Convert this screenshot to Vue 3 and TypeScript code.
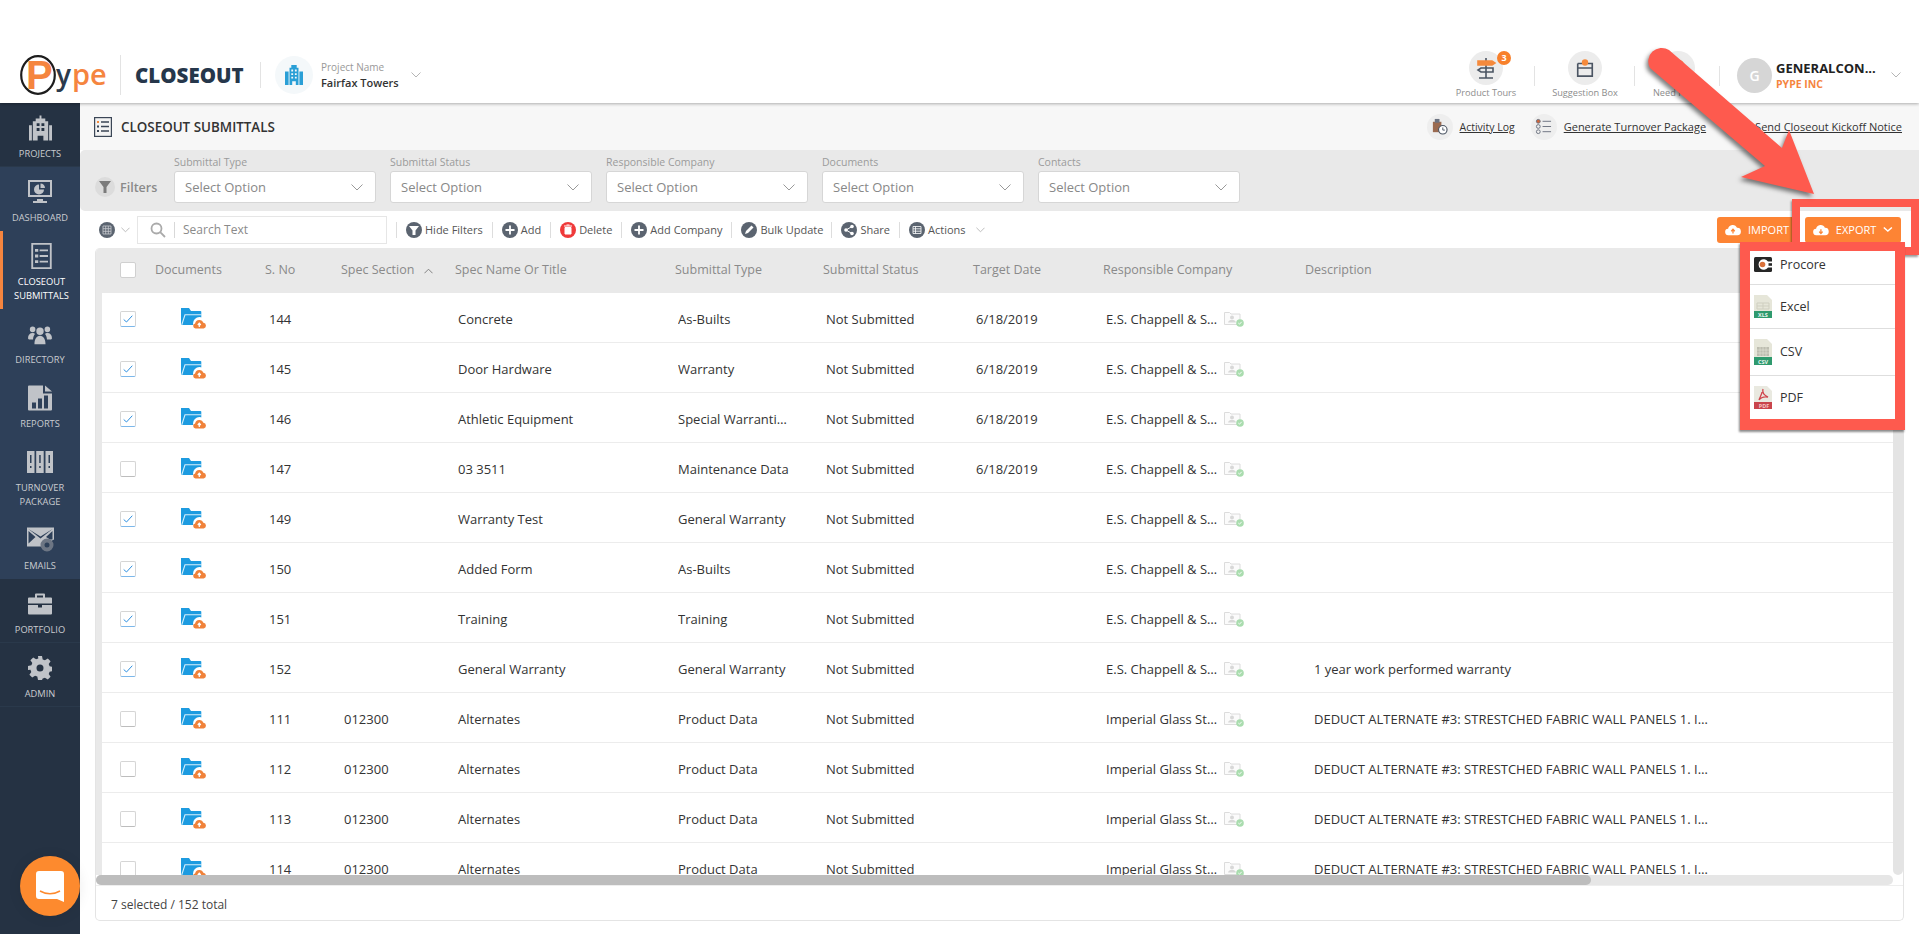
<template>
  <div class="app">
    <svg class="defs" width="0" height="0">
      <defs>
        <symbol id="folder" viewBox="0 0 25 21">
          <path d="M0 0h8l2 3h9.500a.8.8 0 0 1 .8.8V17H0z" fill="#1d9be0" />
          <path d="M.7 17L4 6.800h17" fill="none" stroke="#d5eefa" stroke-width="1.100" />
          <circle cx="18.500" cy="15.500" r="6.500" fill="#fff" />
          <path d="M14.500 20.500a2.600 2.600 0 0 1-.4-5.100 4.300 4.300 0 0 1 8.300-.6 2.900 2.900 0 0 1 .3 5.700z" fill="#f0823a" />
          <path d="M18.300 19v-3.200M16.800 17l1.500-1.800 1.500 1.800" fill="none" stroke="#fff" stroke-width="1.200" />
        </symbol>
        <symbol id="person-folder" viewBox="0 0 20 16">
          <path d="M.5 1.500h5l1.500 1.500h9v10.500H.5z" fill="#fbfbfb" stroke="#dcdcdc" />
          <circle cx="8" cy="6.500" r="2" fill="#d8d8d8" />
          <path d="M4 11.500c.5-2 2-2.500 4-2.500s3.500.5 4 2.500z" fill="#d8d8d8" />
          <circle cx="16" cy="12" r="3.800" fill="#a9dcae" />
          <path d="M14.300 12l1.200 1.200 2.200-2.400" fill="none" stroke="#fff" stroke-width=".9" />
        </symbol>
      </defs>
    </svg>

    <header class="topbar">
      <svg class="logo" viewBox="0 0 87 40" width="87" height="40">
        <ellipse cx="18" cy="20" rx="16.800" ry="18.800" fill="#fff" stroke="#1d1d1d" stroke-width="2.200" />
        <text x="6" y="34" class="logo-p">P</text>
        <text x="36" y="30" class="logo-y">y</text>
        <text x="52" y="30" class="logo-pe">pe</text>
      </svg>
      <span class="vline logo-line"></span>
      <span class="product">CLOSEOUT</span>
      <span class="vline product-line"></span>
      <span class="project-icon">
        <svg viewBox="0 0 20 22" width="18" height="20" fill="#2a9fd6">
          <path d="M7 0h6v3h2v19h-3v-4H8v4H5V3h2z" />
          <path d="M0 7h4v15H0zM16 7h4v15h-4z" />
          <path d="M7 5h2v2H7zm4 0h2v2h-2zM7 9h2v2H7zm4 0h2v2h-2zM7 13h2v2H7zm4 0h2v2h-2z" fill="#f4f8fa" />
        </svg>
      </span>
      <div class="project">
        <span class="project-label">Project Name</span>
        <span class="project-name">Fairfax Towers</span>
      </div>
      <svg class="chev project-chev" viewBox="0 0 10 6" width="10" height="6"><path d="M.5.500L5 5l4.500-4.500" /></svg>

      <div class="top-right">
        <div class="tool tool-tours">
          <span class="tool-icon">
            <svg viewBox="0 0 22 22" width="22" height="22" fill="none" stroke="#4b5563" stroke-width="1.600">
              <path d="M11 1v20M4 21h14" />
              <path d="M18 11v4H6l-3-2 3-2z" />
              <path d="M3 4h14l3 2-3 2H3z" fill="#f58a3c" stroke="#f58a3c" />
            </svg>
            <b class="badge">3</b>
          </span>
          <span class="tool-label">Product Tours</span>
        </div>
        <div class="tool tool-box">
          <span class="tool-icon">
            <svg viewBox="0 0 22 22" width="20" height="20" fill="none" stroke="#4b5563" stroke-width="1.800">
              <path d="M3 6h5M14 6h5v14H3V6M3 11h16" />
              <circle cx="11" cy="5" r="3.500" fill="#f58a3c" stroke="none" />
            </svg>
          </span>
          <span class="tool-label">Suggestion Box</span>
        </div>
        <div class="tool tool-help">
          <span class="tool-icon">
            <svg viewBox="0 0 22 22" width="20" height="20" fill="none" stroke="#4b5563" stroke-width="1.800">
              <circle cx="11" cy="9" r="6.500" stroke="#f58a3c" />
              <path d="M8 18h6M9 21h4" />
            </svg>
          </span>
          <span class="tool-label">Need Help?</span>
        </div>
        <div class="user">
          <span class="avatar">G</span>
          <div class="user-text">
            <span class="user-name">GENERALCON...</span>
            <span class="user-org">PYPE INC</span>
          </div>
          <svg class="chev" viewBox="0 0 10 6" width="10" height="6"><path d="M.5.500L5 5l4.500-4.500" /></svg>
        </div>
      </div>
    </header>

    <div class="body">
      <nav class="sidebar">
        <a v-for="item in navItems" :key="item.label" class="nav-item" :class="item.tone">
          <svg class="nav-icon" :viewBox="item.box" :width="item.w" :height="item.h" fill="#c0c3c8">
            <path v-for="p in item.paths" :key="p.d" :d="p.d" :fill="p.fill" :fill-rule="p.rule" />
          </svg>
          <span v-for="line in item.label.split(' ')" :key="line" class="nav-label">{{ line }}</span>
        </a>
      </nav>

      <main class="main">
        <div class="subhead">
          <svg class="title-icon" viewBox="0 0 18 20" width="18" height="20" fill="none" stroke="#3b4656" stroke-width="1.200">
            <rect x=".6" y=".6" width="16.800" height="18.800" fill="#f3f3f3" />
            <path d="M7 5h8M7 9.500h8M7 14h8" stroke-width="1.600" />
            <path d="M3 5h2" stroke="#f58a3c" stroke-width="2" />
            <path d="M3 9.500h2M3 14h2" stroke-width="2" />
          </svg>
          <span class="title">CLOSEOUT SUBMITTALS</span>
          <div class="sub-links">
            <a class="sub-link">
              <span class="sub-icon">
                <svg viewBox="0 0 18 18" width="17" height="17">
                  <path d="M2 4h9v11H2z" fill="#9a6a50" />
                  <path d="M4 1h5v4H4z" fill="#6b7280" />
                  <circle cx="12.500" cy="12.500" r="4.500" fill="#fff" stroke="#4b5563" stroke-width="1.200" />
                  <path d="M12.500 10v2.800h2.200" fill="none" stroke="#4b5563" />
                </svg>
              </span>
              <span class="sub-text sub-activity">Activity Log</span>
            </a>
            <a class="sub-link">
              <span class="sub-icon">
                <svg viewBox="0 0 18 18" width="17" height="17" fill="none" stroke="#6b7280" stroke-width="1">
                  <circle cx="3.500" cy="3.500" r="2" fill="#d0653a" />
                  <circle cx="3.500" cy="9" r="2" />
                  <circle cx="3.500" cy="14.500" r="2" />
                  <path d="M8 3.500h9M8 9h9M8 14.500h9" />
                </svg>
              </span>
              <span class="sub-text">Generate Turnover Package</span>
            </a>
            <a class="sub-link">
              <span class="sub-icon">
                <svg viewBox="0 0 18 18" width="16" height="16" fill="none" stroke="#6b7280"><path d="M2 4h14v10H2zM2 4l7 6 7-6" /></svg>
              </span>
              <span class="sub-text">Send Closeout Kickoff Notice</span>
            </a>
          </div>
        </div>

        <div class="filters">
          <div class="filter-title">
            <span class="filter-dot">
              <svg viewBox="0 0 12 12" width="12" height="12"><path d="M0 0h12L7.500 6v6h-3V6z" fill="#7b7b7b" /></svg>
            </span>
            Filters
          </div>
          <label v-for="f in filterFields" :key="f" class="filter">
            <span class="filter-label">{{ f }}</span>
            <span class="select">
              Select Option
              <svg class="chev" viewBox="0 0 12 7" width="12" height="7"><path d="M.5.500L6 6l5.500-5.500" /></svg>
            </span>
          </label>
        </div>

        <div class="toolbar">
          <span class="round-icon view-icon">
            <svg viewBox="0 0 10 10" width="10" height="10" fill="none" stroke="#c9ccd0" stroke-width=".8"><path d="M1 1h8v8H1zM1 3.700h8M1 6.300h8M3.700 1v8M6.300 1v8" /></svg>
          </span>
          <svg class="chev view-chev" viewBox="0 0 10 6" width="9" height="6"><path d="M.5.500L5 5l4.500-4.500" /></svg>
          <div class="search">
            <svg viewBox="0 0 16 16" width="16" height="16" fill="none" stroke="#aaa" stroke-width="1.800"><circle cx="6.500" cy="6.500" r="5" /><path d="M10.200 10.200L15 15" /></svg>
            <span class="search-text">Search Text</span>
          </div>
          <div class="actions">
            <a v-for="a in toolActions" :key="a.label" class="action">
              <span class="round-icon" :class="{ 'is-red': a.red }">
                <svg viewBox="0 0 16 16" width="16" height="16" v-html="a.icon"></svg>
              </span>
              {{ a.label }}
              <svg v-if="a.caret" class="chev action-chev" viewBox="0 0 10 6" width="9" height="6"><path d="M.5.500L5 5l4.500-4.500" /></svg>
            </a>
          </div>
          <div class="io-buttons">
            <button class="io-btn import-btn">
              <svg viewBox="0 0 20 15" width="18" height="14"><path d="M4.500 14a4 4 0 0 1-.6-8A5.800 5.800 0 0 1 15 4.800 4.600 4.600 0 0 1 15.500 14z" fill="#fff" /><path d="M10 12V7M7.800 9L10 6.600 12.200 9" fill="none" stroke="#fd8434" stroke-width="1.600" /></svg>
              IMPORT
            </button>
            <div class="export-wrap">
              <button class="io-btn export-btn">
                <svg viewBox="0 0 20 15" width="18" height="14"><path d="M4.500 14a4 4 0 0 1-.6-8A5.800 5.800 0 0 1 15 4.800 4.600 4.600 0 0 1 15.500 14z" fill="#fff" /><path d="M10 6.500v5M7.800 9.500l2.200 2.400 2.200-2.400" fill="none" stroke="#fd8434" stroke-width="1.600" /></svg>
                EXPORT
                <svg viewBox="0 0 12 7" width="11" height="7" fill="none" stroke="#fff" stroke-width="1.800"><path d="M1 1l5 4.500L11 1" /></svg>
              </button>
              <div class="highlight"></div>
              <ul class="export-menu">
                <li class="menu-item">
                  <svg viewBox="0 0 18 15" width="18" height="15">
                    <rect width="18" height="15" rx="1.500" fill="#262626" />
                    <path d="M18 4.500h-4a5.200 5.200 0 1 0 0 6h4z" fill="#fff" />
                    <path d="M18 6.200h-3.500v2.600H18z" fill="#262626" />
                    <circle cx="8.500" cy="7.500" r="2.800" fill="#d9713a" />
                  </svg>
                  Procore
                </li>
                <li class="menu-item">
                  <svg viewBox="0 0 18 23" width="18" height="23">
                    <path d="M0 0h13l5 5v12H0z" fill="#e6e6d9" />
                    <path d="M3 8h12v6H3zM3 11h12M9 8v6" fill="none" stroke="#cfcfc0" />
                    <rect y="16" width="18" height="7" fill="#2f9a6e" />
                    <text x="9" y="22" class="file-tag">XLS</text>
                  </svg>
                  Excel
                </li>
                <li class="menu-item">
                  <svg viewBox="0 0 18 26" width="18" height="26">
                    <path d="M0 0h13l5 5v15H0z" fill="#e6e6d9" />
                    <path d="M3 8h12v9H3z" fill="#bdbdb0" />
                    <path d="M3 11h12M3 14h12M6 8v9M9 8v9M12 8v9" stroke="#e6e6d9" stroke-width=".6" />
                    <rect y="18" width="18" height="8" fill="#2f9a6e" />
                    <text x="9" y="25" class="file-tag">CSV</text>
                  </svg>
                  CSV
                </li>
                <li class="menu-item">
                  <svg viewBox="0 0 18 23" width="18" height="23">
                    <path d="M0 0h13l5 5v12H0z" fill="#e9e9e0" />
                    <path d="M9 3c-1 3 1 6 5 8-3-.5-7 0-9 3 1-3 3-6 3-8" fill="none" stroke="#d0454c" stroke-width="1.300" />
                    <rect y="16" width="18" height="7" fill="#c9454c" />
                    <text x="10" y="22" class="file-tag pdf-tag">PDF</text>
                  </svg>
                  PDF
                </li>
              </ul>
            </div>
          </div>
        </div>

        <section class="grid-card">
          <div class="grid-head grid-cols">
            <span class="check-col"><i class="box box-head"></i></span>
            <span v-for="c in columns" :key="c" class="head-cell">
              {{ c }}
              <svg v-if="c === 'Spec Section'" class="sort" viewBox="0 0 10 6" width="9" height="6"><path d="M.5 5.500L5 1l4.500 4.500" /></svg>
            </span>
          </div>
          <div class="grid-body">
            <div class="rows">
              <div v-for="r in rows" :key="r.no" class="grid-row grid-cols">
                <span class="check-col">
                  <i class="box" :class="{ checked: r.checked }">
                    <svg v-if="r.checked" viewBox="0 0 10 8" width="10" height="8" fill="none" stroke="#2d8fe0" stroke-width="1"><path d="M.7 4.500L3.500 7 9.300.7" /></svg>
                  </i>
                </span>
                <span class="doc-cell"><svg width="25" height="21"><use href="#folder" /></svg></span>
                <span class="cell cell-no">{{ r.no }}</span>
                <span class="cell">{{ r.section }}</span>
                <span class="cell">{{ r.name }}</span>
                <span class="cell"><span class="clip clip-type">{{ r.type }}</span></span>
                <span class="cell">Not Submitted</span>
                <span class="cell">{{ r.date }}</span>
                <span class="cell company-cell">
                  <span class="clip clip-company">{{ r.company }}</span>
                  <svg width="20" height="16"><use href="#person-folder" /></svg>
                </span>
                <span class="cell cell-desc"><span class="clip clip-desc">{{ r.desc }}</span></span>
              </div>
            </div>
            <div class="vscroll"></div>
          </div>
          <div class="hscroll"><div class="hscroll-thumb"></div></div>
          <div class="grid-foot">7 selected / 152 total</div>
        </section>
      </main>
    </div>

    <button class="chat-btn">
      <svg viewBox="0 0 28 31" width="28" height="31">
        <path d="M3 0h22a3 3 0 0 1 3 3v28l-7-3H3a3 3 0 0 1-3-3V3a3 3 0 0 1 3-3z" fill="#fff" />
        <path d="M4 20c6 3.500 14 3.500 20 0" fill="none" stroke="#fd8a2e" stroke-width="1.500" />
      </svg>
    </button>

    <svg class="arrow" viewBox="1630 30 200 180" width="200" height="180">
      <path d="M1669 50L1782 148 1789 130 1814 194 1741 177 1765 166 1650 68A13.500 13.500 0 0 1 1669 50z" fill="#fe5a4e" />
    </svg>
  </div>
</template>

<script setup lang="ts">
interface NavPath {
  d: string
  fill?: string
  rule?: 'evenodd'
}

interface NavItem {
  label: string
  tone: string
  box: string
  w: number
  h: number
  paths: NavPath[]
}

const navItems: NavItem[] = [
  {
    label: 'PROJECTS', tone: 'dark', box: '0 0 24 26', w: 23, h: 25,
    paths: [{ d: 'M11 0h2v3h4v3h3v20h-5v-5H9v5H4V6h3V3h4zM0 10h3v16H0zM21 10h3v16h-3zM8 8v3h3V8zm5 0v3h3V8zM8 13v3h3v-3zm5 0v3h3v-3z', rule: 'evenodd' }]
  },
  {
    label: 'DASHBOARD', tone: 'mid', box: '0 0 24 24', w: 24, h: 24,
    paths: [
      { d: 'M0 0h24v17H0zM9 19h6v2h4v2H5v-2h4z' },
      { d: 'M2 2v13h20V2z', fill: '#2e4059' },
      { d: 'M11 4.500a5 5 0 1 0 5 5h-5zM12.500 3.500v4.500h4.500a4.500 4.500 0 0 0-4.500-4.500z' }
    ]
  },
  {
    label: 'CLOSEOUT SUBMITTALS', tone: 'active', box: '0 0 22 28', w: 21, h: 28,
    paths: [
      { d: 'M0 0h22v28H0zM2 2v24h18V2z', rule: 'evenodd' },
      { d: 'M9 7h9v2H9zM9 13h9v2H9zM9 19h9v2H9zM4 6.500h3.500v3H4zM4 12.500h3.500v3H4zM4 18.500h3.500v3H4z' }
    ]
  },
  {
    label: 'DIRECTORY', tone: 'mid', box: '0 0 26 22', w: 24, h: 21,
    paths: [{ d: 'M5 3a3 3 0 1 1 0 6 3 3 0 0 1 0-6zM21 3a3 3 0 1 1 0 6 3 3 0 0 1 0-6zM13 4a4 4 0 1 1 0 8 4 4 0 0 1 0-8zM0 16c0-4 2-6 5-6 1 0 2 .3 2.500 1-1 1.500-2 3-2 6H1zM26 16c0-4-2-6-5-6-1 0-2 .3-2.500 1 1 1.500 2 3 2 6h4.500zM7 22c0-5 2-9 6-9s6 4 6 9z' }]
  },
  {
    label: 'REPORTS', tone: 'mid', box: '0 0 24 25', w: 24, h: 25,
    paths: [
      { d: 'M1 0h14v8h9v16a1 1 0 0 1-1 1H1a1 1 0 0 1-1-1V1a1 1 0 0 1 1-1zM17 0l7 6h-7z' },
      { d: 'M4 17h4v6H4zM10 13h4v10h-4zM16 10h4v13h-4z', fill: '#2e4059' }
    ]
  },
  {
    label: 'TURNOVER PACKAGE', tone: 'mid', box: '0 0 26 22', w: 26, h: 22,
    paths: [{ d: 'M0 0h7.500v22H0zM9.200 0h7.500v22H9.200zM18.500 0H26v22h-7.500zM3 4v8h1.500V4zM12.200 4v8h1.500V4zM21.500 4v8H23V4zM3 15v2h1.500v-2zM12.200 15v2h1.500v-2zM21.500 15v2H23v-2z', rule: 'evenodd' }]
  },
  {
    label: 'EMAILS', tone: 'mid', box: '0 0 27 25', w: 27, h: 25,
    paths: [
      { d: 'M0 0h27v12l-6 3-3 4H0zM1.500 1.500L13.500 11l12-9.500-12 7.500zM1.500 3.500V16l7-6.500zM25.500 3.500L19 9.500l4 2.500h2.500z', rule: 'evenodd' },
      { d: 'M20 11a6.500 6.500 0 1 1 0 13 6.500 6.500 0 0 1 0-13z', fill: '#6d7684' },
      { d: 'M20 15a2.500 2.500 0 1 1 0 5 2.500 2.500 0 0 1 0-5z', fill: '#2e4059' }
    ]
  },
  {
    label: 'PORTFOLIO', tone: 'dark', box: '0 0 24 21', w: 24, h: 21,
    paths: [{ d: 'M8 0h8a1 1 0 0 1 1 1v3h6a1 1 0 0 1 1 1v5H0V5a1 1 0 0 1 1-1h6V1a1 1 0 0 1 1-1zm1 2v2h6V2zM0 11.500h10V14h4v-2.500h10V20a1 1 0 0 1-1 1H1a1 1 0 0 1-1-1z', rule: 'evenodd' }]
  },
  {
    label: 'ADMIN', tone: 'dark', box: '0 0 24 24', w: 24, h: 24,
    paths: [{ d: 'M10 0h4l.7 3.400 2.200.9L19.800 2.400l2.800 2.800-1.900 2.900.9 2.200 3.400.7v4l-3.400.7-.9 2.200 1.900 2.900-2.800 2.800-2.900-1.900-2.200.9L14 24h-4l-.7-3.400-2.200-.9-2.900 1.900-2.800-2.800 1.900-2.900-.9-2.200L0 14v-4l3.400-.7.9-2.200-1.900-2.900 2.800-2.800 2.900 1.900 2.200-.9zM12 8.500a3.500 3.500 0 1 0 0 7 3.500 3.500 0 0 0 0-7z', rule: 'evenodd' }]
  }
]

const filterFields = ['Submittal Type', 'Submittal Status', 'Responsible Company', 'Documents', 'Contacts']

const toolActions = [
  { label: 'Hide Filters', icon: '<path d="M3 4h10L9.500 8.500V13h-3V8.500z" fill="#fff"/>' },
  { label: 'Add', icon: '<path d="M8 3.500v9M3.500 8h9" stroke="#fff" stroke-width="1.800"/>' },
  { label: 'Delete', red: true, icon: '<path d="M5 5.500h6V12H5zM4 4h8M6.500 3h3" fill="#fff" stroke="#fff"/>' },
  { label: 'Add Company', icon: '<path d="M8 3.500v9M3.500 8h9" stroke="#fff" stroke-width="1.800"/>' },
  { label: 'Bulk Update', icon: '<path d="M4 12l1-3 5.500-5.500 2 2L7 11z" fill="#fff"/>' },
  { label: 'Share', icon: '<path d="M11 4.500L5 8l6 3.500" stroke="#fff" fill="none"/><circle cx="11" cy="4.500" r="1.800" fill="#fff"/><circle cx="5" cy="8" r="1.800" fill="#fff"/><circle cx="11" cy="11.500" r="1.800" fill="#fff"/>' },
  { label: 'Actions', caret: true, icon: '<path d="M4 4.500h8v7H4zM4 6.800h8M4 9.200h8M6.500 4.500v7" stroke="#fff" stroke-width=".8" fill="none"/>' }
]

const columns = [
  'Documents', 'S. No', 'Spec Section', 'Spec Name Or Title', 'Submittal Type',
  'Submittal Status', 'Target Date', 'Responsible Company', 'Description'
]

const chappell = 'E.S. Chappell & Sons Inc'
const imperial = 'Imperial Glass Structures'
const deduct = 'DEDUCT ALTERNATE #3: STRESTCHED FABRIC WALL PANELS 1. INSTALL PANELS'

const rows = [
  { no: 144, checked: true, section: '', name: 'Concrete', type: 'As-Builts', date: '6/18/2019', company: chappell, desc: '' },
  { no: 145, checked: true, section: '', name: 'Door Hardware', type: 'Warranty', date: '6/18/2019', company: chappell, desc: '' },
  { no: 146, checked: true, section: '', name: 'Athletic Equipment', type: 'Special Warranties Letter', date: '6/18/2019', company: chappell, desc: '' },
  { no: 147, checked: false, section: '', name: '03 3511', type: 'Maintenance Data', date: '6/18/2019', company: chappell, desc: '' },
  { no: 149, checked: true, section: '', name: 'Warranty Test', type: 'General Warranty', date: '', company: chappell, desc: '' },
  { no: 150, checked: true, section: '', name: 'Added Form', type: 'As-Builts', date: '', company: chappell, desc: '' },
  { no: 151, checked: true, section: '', name: 'Training', type: 'Training', date: '', company: chappell, desc: '' },
  { no: 152, checked: true, section: '', name: 'General Warranty', type: 'General Warranty', date: '', company: chappell, desc: '1 year work performed warranty' },
  { no: 111, checked: false, section: '012300', name: 'Alternates', type: 'Product Data', date: '', company: imperial, desc: deduct },
  { no: 112, checked: false, section: '012300', name: 'Alternates', type: 'Product Data', date: '', company: imperial, desc: deduct },
  { no: 113, checked: false, section: '012300', name: 'Alternates', type: 'Product Data', date: '', company: imperial, desc: deduct },
  { no: 114, checked: false, section: '012300', name: 'Alternates', type: 'Product Data', date: '', company: imperial, desc: deduct }
]
</script>

<style>
html,
body {
  margin: 0;
  background: #fff;
}
</style>

<style scoped>
.app {
  position: relative;
  width: 1919px;
  height: 934px;
  overflow: hidden;
  display: flex;
  flex-direction: column;
  font-family: "Open Sans", "Liberation Sans", sans-serif;
  color: #333;
}

.defs {
  position: absolute;
}

.chev {
  fill: none;
  stroke: #b5b5b5;
  stroke-width: 1;
  flex: none;
}

/* top bar */
.topbar {
  position: relative;
  z-index: 2;
  flex: none;
  box-sizing: border-box;
  height: 103px;
  padding: 47px 0 0 20px;
  display: flex;
  align-items: center;
  background: #fff;
  box-shadow: 0 1px 3px rgba(0, 0, 0, 0.3);
}

.logo {
  flex: none;
  overflow: visible;
}

.logo-p {
  font: 700 40px "Liberation Sans", sans-serif;
  fill: #f5853f;
}

.logo-y {
  font: 600 28px "Open Sans", sans-serif;
  fill: #2b3a4d;
}

.logo-pe {
  font: 600 29px "Open Sans", sans-serif;
  fill: #f5853f;
}

.vline {
  flex: none;
  width: 1px;
  background: #e3e3e3;
}

.logo-line {
  height: 40px;
  margin: 0 14px 0 13px;
}

.product {
  width: 111px;
  font-size: 20.500px;
  font-weight: 800;
  color: #26374b;
  white-space: nowrap;
}

.product-line {
  height: 26px;
  margin: 0 14px;
}

.project-icon {
  width: 38px;
  height: 38px;
  flex: none;
  border-radius: 50%;
  background: #f4f8fa;
  display: flex;
  align-items: center;
  justify-content: center;
}

.project {
  margin-left: 8px;
  display: flex;
  flex-direction: column;
  gap: 1px;
}

.project-label {
  font-size: 10px;
  line-height: 14px;
  color: #999;
}

.project-name {
  font-size: 11px;
  line-height: 15px;
  font-weight: 600;
  color: #333;
}

.project-chev {
  margin-left: 12px;
}

.top-right {
  margin-left: auto;
  display: flex;
  align-items: center;
}

.tool {
  position: relative;
  box-sizing: border-box;
  display: flex;
  flex-direction: column;
  align-items: center;
  height: 48px;
}

.tool::after {
  content: "";
  position: absolute;
  right: 0;
  top: 15px;
  height: 20px;
  width: 1px;
  background: #e3e3e3;
}

.tool-tours {
  width: 98px;
}

.tool-box {
  width: 100px;
}

.tool-help {
  width: 85px;
}

.tool-icon {
  position: relative;
  width: 34px;
  height: 34px;
  flex: none;
  border-radius: 50%;
  background: #ececec;
  display: flex;
  align-items: center;
  justify-content: center;
}

.badge {
  position: absolute;
  right: -8px;
  top: 0;
  width: 14px;
  height: 14px;
  border-radius: 50%;
  background: #f8802b;
  color: #fff;
  font-size: 9px;
  line-height: 14px;
  text-align: center;
}

.tool-label {
  margin-top: 1px;
  font-size: 9.200px;
  line-height: 13px;
  color: #8c8c8c;
  white-space: nowrap;
}

.user {
  display: flex;
  align-items: center;
  padding: 0 18px 0 17px;
}

.avatar {
  width: 35px;
  height: 35px;
  border-radius: 50%;
  background: #d6d6d6;
  color: #fff;
  font-size: 14px;
  font-weight: 600;
  line-height: 35px;
  text-align: center;
}

.user-text {
  width: 115px;
  margin-left: 4px;
  display: flex;
  flex-direction: column;
}

.user-name {
  font-size: 13px;
  line-height: 17px;
  font-weight: 700;
  color: #222;
  white-space: nowrap;
}

.user-org {
  font-size: 10.500px;
  line-height: 14px;
  font-weight: 700;
  color: #f5853f;
}

/* body */
.body {
  flex: 1;
  min-height: 0;
  display: flex;
}

.sidebar {
  flex: none;
  width: 80px;
  background: #253243;
  display: flex;
  flex-direction: column;
}

.nav-item {
  box-sizing: border-box;
  height: 64px;
  padding-top: 12px;
  display: flex;
  flex-direction: column;
  align-items: center;
  color: #c9ccd0;
}

.nav-item.dark {
  background: #253243;
  border-bottom: 1px solid #2a394b;
}

.nav-item.mid {
  background: #2e4059;
}

.nav-item.active {
  height: 78px;
  background: #2e4059;
  border-left: 3px solid #f5853f;
  color: #fff;
}

.nav-item:nth-child(6) {
  height: 78px;
}

.nav-icon {
  flex: none;
  height: 26px;
  margin-bottom: 6px;
}

.nav-label {
  font-size: 9.300px;
  line-height: 14px;
  white-space: nowrap;
}

.main {
  flex: 1;
  min-width: 0;
  display: flex;
  flex-direction: column;
}

.subhead {
  flex: none;
  height: 47px;
  padding: 0 17px 0 14px;
  display: flex;
  align-items: center;
  background: #f7f7f7;
}

.title-icon {
  flex: none;
}

.title {
  margin-left: 9px;
  font-size: 13.400px;
  font-weight: 600;
  color: #333;
}

.sub-links {
  margin-left: auto;
  display: flex;
  gap: 16px;
}

.sub-link {
  display: flex;
  align-items: center;
  gap: 7px;
}

.sub-icon {
  width: 26px;
  height: 26px;
  border-radius: 50%;
  background: #eeeeee;
  display: flex;
  align-items: center;
  justify-content: center;
}

.sub-text {
  font-size: 11px;
  text-decoration: underline;
  color: #333;
}

.sub-activity {
  font-size: 10.500px;
}

.filters {
  flex: none;
  box-sizing: border-box;
  height: 61px;
  padding: 5px 0 0 15px;
  display: flex;
  gap: 14px;
  background: #e9e9e9;
  border-radius: 5px 0 0 5px;
}

.filter-title {
  width: 65px;
  display: flex;
  align-items: center;
  gap: 5px;
  margin-top: 8px;
  font-size: 12.500px;
  font-weight: 600;
  color: #8a8a8a;
}

.filter-dot {
  width: 20px;
  height: 20px;
  flex: none;
  border-radius: 50%;
  background: #dcdcdc;
  display: flex;
  align-items: center;
  justify-content: center;
}

.filter {
  width: 202px;
  display: flex;
  flex-direction: column;
}

.filter-label {
  font-size: 10.500px;
  line-height: 14px;
  margin-bottom: 2px;
  color: #9b9b9b;
}

.select {
  box-sizing: border-box;
  height: 32px;
  padding: 0 12px 0 10px;
  display: flex;
  align-items: center;
  justify-content: space-between;
  background: #fff;
  border: 1px solid #d6d6d6;
  border-radius: 3px;
  font-size: 13px;
  color: #888;
}

.select .chev {
  stroke: #999;
}

.toolbar {
  flex: none;
  height: 37px;
  padding: 0 18px 0 19px;
  display: flex;
  align-items: center;
  background: #fff;
}

.round-icon {
  width: 16px;
  height: 16px;
  flex: none;
  border-radius: 50%;
  background: #5b6470;
  display: flex;
  align-items: center;
  justify-content: center;
}

.round-icon.is-red {
  background: #ef3a3a;
}

.view-chev {
  margin: 0 7px 0 6px;
}

.search {
  box-sizing: border-box;
  width: 250px;
  height: 28px;
  padding: 0 12px;
  display: flex;
  align-items: center;
  border: 1px solid #e6e6e6;
}

.search-text {
  margin-left: 8px;
  padding-left: 8px;
  line-height: 16px;
  border-left: 1px solid #d8d8d8;
  font-size: 12px;
  color: #8a8a8a;
}

.actions {
  margin-left: 9px;
  display: flex;
  align-items: center;
}

.action {
  height: 16px;
  padding: 0 9px;
  display: flex;
  align-items: center;
  gap: 3px;
  border-left: 1px solid #ddd;
  font-size: 11px;
  color: #555;
  white-space: nowrap;
}

.action:nth-child(5) {
  padding-right: 8px;
}

.action-chev {
  margin-left: 7px;
}

.io-buttons {
  margin-left: auto;
  display: flex;
  gap: 8px;
}

.io-btn {
  box-sizing: border-box;
  height: 26px;
  padding: 0 8px;
  display: flex;
  align-items: center;
  gap: 7px;
  border: 0;
  border-radius: 3px;
  background: #fd8434;
  color: #fff;
  font-family: inherit;
  font-size: 11px;
}

.import-btn {
  width: 80px;
}

.export-wrap {
  position: relative;
}

.export-btn {
  width: 96px;
}

.highlight {
  position: absolute;
  left: -13px;
  top: -18px;
  right: -18px;
  bottom: -12px;
  border: 8px solid #fe5a4e;
  box-shadow: -1px 2px 2px rgba(0, 0, 0, 0.4);
}

.export-menu {
  position: absolute;
  z-index: 3;
  left: -65px;
  top: 25px;
  width: 165px;
  height: 188px;
  box-sizing: border-box;
  margin: 0;
  padding: 0;
  list-style: none;
  background: #fff;
  border: solid #fe5a4e;
  border-width: 9px 10px 11px;
  box-shadow: -1px 2px 2px rgba(0, 0, 0, 0.45);
}

.menu-item {
  box-sizing: border-box;
  padding-left: 4px;
  display: flex;
  align-items: center;
  gap: 8px;
  font-size: 12.500px;
  color: #333;
  border-bottom: 1px solid #dedede;
}

.menu-item:nth-child(1) {
  height: 34px;
  padding-bottom: 5px;
}

.menu-item:nth-child(2) {
  height: 44px;
}

.menu-item:nth-child(3) {
  height: 47px;
}

.menu-item:nth-child(4) {
  height: 43px;
  border-bottom: 0;
}

.file-tag {
  font: 700 5.500px "Open Sans", sans-serif;
  fill: #e9f5ef;
  text-anchor: middle;
}

.pdf-tag {
  fill: #f5c5c5;
}

/* grid */
.grid-card {
  flex: none;
  box-sizing: border-box;
  width: 1809px;
  height: 673px;
  margin-left: 15px;
  display: flex;
  flex-direction: column;
  border: 1px solid #e4e4e4;
  border-top: 0;
  border-radius: 5px;
  background: #fff;
  overflow: hidden;
}

.grid-cols {
  display: grid;
  grid-template-columns: 50px 110px 76px 114px 220px 148px 150px 130px 202px 1fr;
  align-items: center;
}

.grid-head {
  flex: none;
  height: 45px;
  padding: 0 0 2px 6px;
  box-sizing: border-box;
  background: #e9e9e9;
}

.head-cell {
  padding-left: 3px;
  font-size: 12.500px;
  color: #8a8a8a;
  white-space: nowrap;
}

.sort {
  margin-left: 6px;
  fill: none;
  stroke: #777;
}

.check-col {
  padding-left: 18px;
  display: flex;
}

.box {
  box-sizing: border-box;
  width: 16px;
  height: 16px;
  display: flex;
  align-items: center;
  justify-content: center;
  background: #fff;
  border: 1px solid #d5d5d5;
  border-bottom-color: #bdbdbd;
  border-radius: 2px;
}

.box.checked {
  border-bottom: 1px solid #7db8ea;
}

.box-head {
  border-color: #d0d0d0;
}

.grid-body {
  position: relative;
  flex: 1;
  min-height: 0;
  overflow: hidden;
  border-left: 6px solid #e9e9e9;
}

.grid-row {
  box-sizing: border-box;
  height: 50px;
  padding-top: 2px;
  border-bottom: 1px solid #ececec;
}

.rows {
  margin-right: 10px;
}

.check-col + .doc-cell {
  padding-left: 29px;
  display: flex;
}

.cell {
  padding-left: 6px;
  font-size: 13px;
  color: #333;
  white-space: nowrap;
}

.cell-no {
  padding-left: 7px;
}

.cell-desc {
  padding-left: 12px;
}

.clip {
  display: block;
  overflow: hidden;
  text-overflow: ellipsis;
}

.clip-type {
  width: 113px;
}

.clip-company {
  width: 112px;
}

.clip-desc {
  width: 394px;
}

.company-cell {
  display: flex;
  align-items: center;
  gap: 6px;
}

.vscroll {
  position: absolute;
  top: 0;
  right: 0;
  bottom: 0;
  width: 10px;
  border-radius: 5px;
  background: #e4e4e4;
}

.hscroll {
  flex: none;
  height: 10px;
  margin-right: 10px;
  border-radius: 5px;
  background: #e6e6e6;
}

.hscroll-thumb {
  width: 1495px;
  height: 10px;
  border-radius: 5px;
  background: #bdbdbd;
}

.grid-foot {
  flex: none;
  height: 34px;
  padding-left: 15px;
  line-height: 38px;
  font-size: 12px;
  color: #444;
  border-top: 1px solid #eee;
}

.chat-btn {
  position: absolute;
  left: 20px;
  top: 856px;
  width: 60px;
  height: 60px;
  padding: 0;
  border: 0;
  border-radius: 50%;
  background: #fd8a2e;
  display: flex;
  align-items: center;
  justify-content: center;
  box-shadow: 0 1px 14px rgba(0, 0, 0, 0.08);
}

.arrow {
  position: absolute;
  z-index: 4;
  left: 1630px;
  top: 30px;
  filter: drop-shadow(-2px 3px 2px rgba(0, 0, 0, 0.5));
}
</style>
